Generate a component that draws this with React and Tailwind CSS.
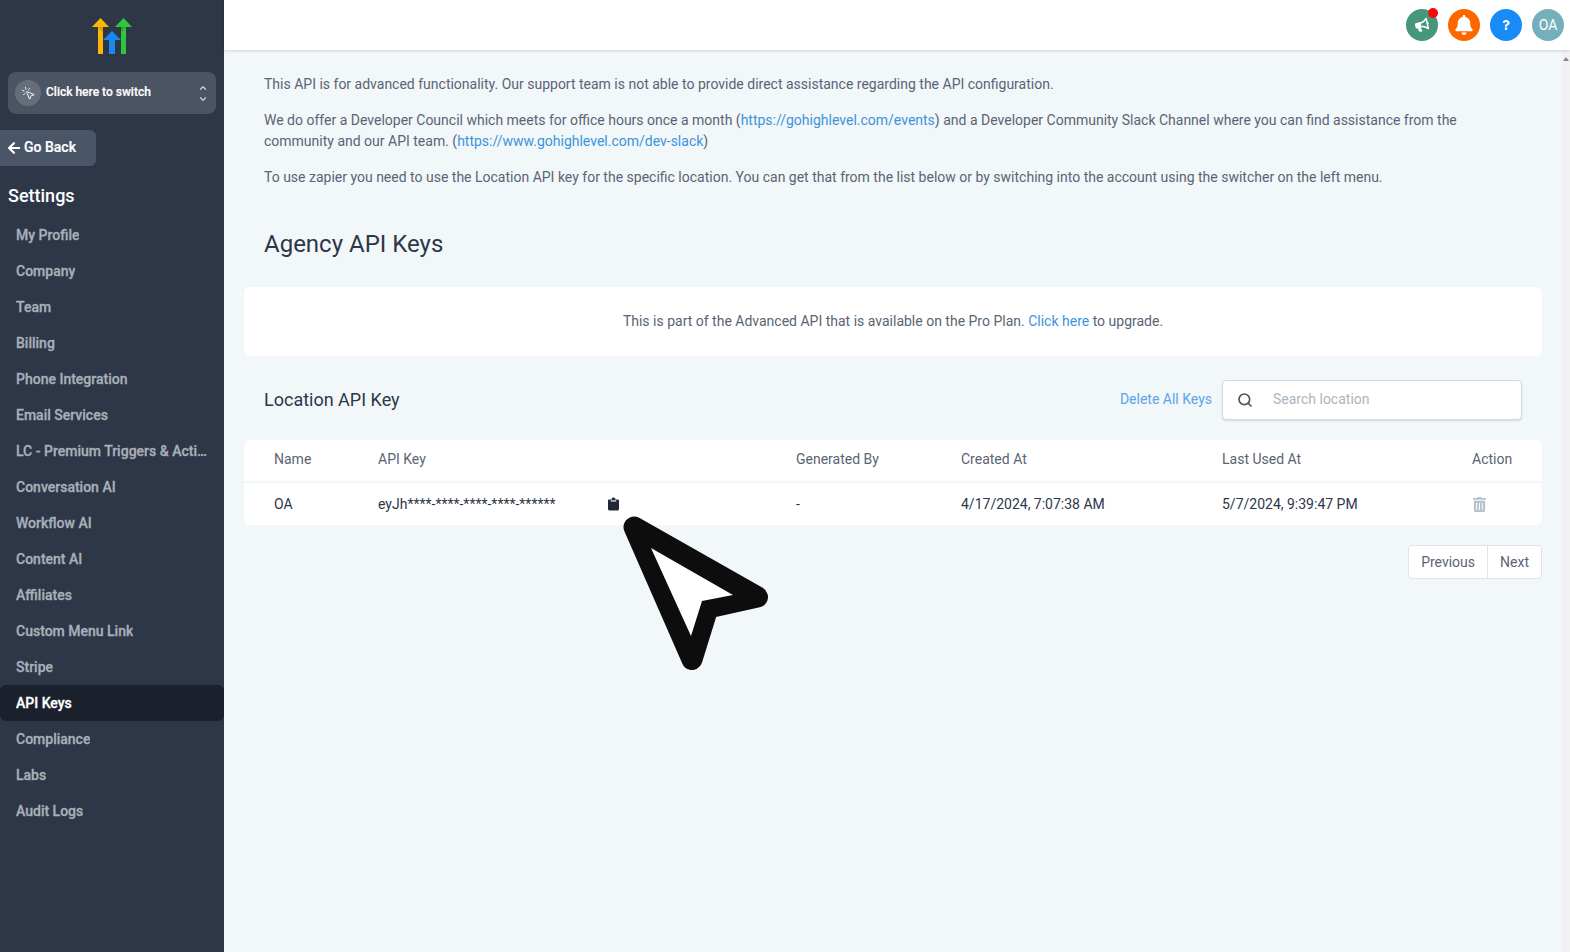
import React from "react";
import { Search, ChevronUp, ChevronDown, MousePointerClick } from "lucide-react";
import { FaBullhorn, FaBell, FaQuestion, FaTrashAlt, FaArrowLeft } from "react-icons/fa";

const items = ["My Profile","Company","Team","Billing","Phone Integration","Email Services","LC - Premium Triggers & Actions","Conversation AI","Workflow AI","Content AI","Affiliates","Custom Menu Link","Stripe","API Keys","Compliance","Labs","Audit Logs"];

function Logo() {
  return (
    <svg width="40" height="36" viewBox="0 0 40 36">
      <path d="M0 9 L8.5 0 L17 9 H11 V36 H6 V9 Z" fill="#fdb604" />
      <path d="M23 9 L31.5 0 L40 9 H34 V36 H29 V9 Z" fill="#2fc73a" />
      <path d="M11 9 L11 14 L6 9 Z" fill="#d89a10" />
      <path d="M29 9 L29 14 L34 9 Z" fill="#27a532" />
      <path d="M11 22 L20 13 L29 22 H23 V36 H17 V22 Z" fill="#1a87f2" />
    </svg>
  );
}

function Clipboard() {
  return (
    <svg width="11" height="14" viewBox="0 0 12 14" className="ml-[1px] mb-[1px]">
      <path d="M1.5 2 H4 C4 0.5 5 0 6 0 C7 0 8 0.5 8 2 H10.5 C11.3 2 12 2.6 12 3.4 V12.5 C12 13.4 11.3 14 10.5 14 H1.5 C0.7 14 0 13.4 0 12.5 V3.4 C0 2.6 0.7 2 1.5 2 Z" fill="#1f2937" />
      <rect x="3" y="3" width="6" height="1.3" fill="#ffffff" />
    </svg>
  );
}

export default function App() {
  return (
    <div className="relative flex h-[952px] w-[1570px] overflow-hidden bg-[#f2f7fa] font-['Roboto',sans-serif] text-[14px] text-[#5a6474]">
      <aside className="flex w-[224px] shrink-0 flex-col bg-[#2d3748]">
        <div className="flex h-[72px] shrink-0 justify-center pt-[18px]"><Logo /></div>
        <div className="mx-[8px] flex h-[42px] items-center rounded-[8px] bg-[#4b5463] pl-[7px] pr-[8px]">
          <span className="flex h-[26px] w-[26px] items-center justify-center rounded-full bg-[#666e7b]">
            <MousePointerClick size={15} color="#ffffff" strokeWidth={1.5} />
          </span>
          <span className="ml-[5px] mb-[2px] flex-1 text-[12px] font-medium text-white [-webkit-text-stroke:0.2px]">Click here to switch</span>
          <span className="flex flex-col items-center text-[#c9cdd3]">
            <ChevronUp size={10} strokeWidth={3} />
            <ChevronDown size={10} strokeWidth={3} className="mt-[1px]" />
          </span>
        </div>
        <div className="mt-[16px] flex h-[36px] w-[96px] items-center gap-[3px] rounded-r-[6px] bg-[#4a5568] pl-[7px] text-[14px] font-medium text-white [-webkit-text-stroke:0.2px]">
          <FaArrowLeft size={14} />
          <span className="mb-[1px]">Go Back</span>
        </div>
        <h2 className="mt-[16px] h-[27px] pl-[8px] text-[18px] leading-[27px] font-medium text-white">Settings</h2>
        <nav className="mt-[8px] flex flex-col">
          {items.map((t) => (
            <div key={t} className={`flex h-[36px] items-center truncate rounded-[6px] pl-[16px] pr-[16px] text-[14px] font-medium [-webkit-text-stroke:0.3px] ${t === "API Keys" ? "bg-[#1a202c] text-white" : "text-[#a9afb8]"}`}>
              <span className="truncate">{t}</span>
            </div>
          ))}
        </nav>
      </aside>

      <div className="flex min-w-0 flex-1 flex-col">
        <header className="relative z-10 flex h-[50px] shrink-0 items-center justify-end gap-[10px] bg-white pr-[6px] shadow-[0_1px_3px_rgba(0,0,0,0.15)]">
          <span className="relative flex h-[32px] w-[32px] items-center justify-center rounded-full bg-[#45967b]">
            <FaBullhorn size={14} color="#fff" className="-rotate-12" />
            <span className="absolute right-[0px] top-[-1px] h-[10px] w-[10px] rounded-full bg-[#f80a0a]" />
          </span>
          <span className="flex h-[32px] w-[32px] items-center justify-center rounded-full bg-[#fe6700]">
            <FaBell size={20} color="#fff" />
          </span>
          <span className="flex h-[32px] w-[32px] items-center justify-center rounded-full bg-[#188bf6]">
            <FaQuestion size={10} color="#fff" />
          </span>
          <span className="flex h-[32px] w-[32px] items-center justify-center rounded-full bg-[#74afbb] text-[14px] text-white">OA</span>
        </header>

        <div className="flex min-h-0 flex-1">
          <main className="min-w-0 flex-1 pl-[20px] pr-[20px]">
            <div className="px-[20px] pt-[24px]">
              <p className="leading-[21px]">This API is for advanced functionality. Our support team is not able to provide direct assistance regarding the API configuration.</p>
              <p className="mt-[15px] leading-[21px]">We do offer a Developer Council which meets for office hours once a month (<span className="text-[#3c94dc]">https://gohighlevel.com/events</span>) and a Developer Community Slack Channel where you can find assistance from the community and our API team. (<span className="text-[#3c94dc]">https://www.gohighlevel.com/dev-slack</span>)</p>
              <p className="mt-[15px] leading-[21px]">To use zapier you need to use the Location API key for the specific location. You can get that from the list below or by switching into the account using the switcher on the left menu.</p>
              <h1 className="mt-[38px] text-[24px] leading-[36px] text-[#2d3748]">Agency API Keys</h1>
            </div>
            <div className="mt-[25px] flex h-[69px] items-center justify-center rounded-[6px] bg-white">
              <span>This is part of the Advanced API that is available on the Pro Plan. <span className="text-[#3c94dc]">Click here</span> to upgrade.</span>
            </div>
            <div className="mt-[24px] flex h-[39px] items-center pl-[20px] pr-[20px]">
              <h3 className="mb-[1px] flex-1 text-[18px] text-[#2d3748]">Location API Key</h3>
              <span className="mr-[10px] text-[#5aa5e8]">Delete All Keys</span>
              <div className="flex h-[40px] w-[300px] items-center rounded-[4px] border border-[#d5dae1] bg-white pl-[14px] shadow-[0_1px_2px_rgba(0,0,0,0.12)]">
                <Search size={16} color="#4b5563" strokeWidth={2.5} />
                <span className="ml-[20px] text-[#adb5bd]">Search location</span>
              </div>
            </div>
            <div className="mt-[21px] overflow-hidden rounded-[6px] bg-white">
              <div className="grid h-[43px] grid-cols-[104px_418px_165px_261px_250px_1fr] items-center border-b-2 border-[#f2f7fa] pb-[3px] pl-[30px]">
                <span>Name</span><span>API Key</span><span>Generated By</span><span>Created At</span><span>Last Used At</span><span>Action</span>
              </div>
              <div className="grid h-[42px] grid-cols-[104px_418px_165px_261px_250px_1fr] items-center pl-[30px] text-[#2d3748]">
                <span>OA</span>
                <span className="flex items-center">
                  <span className="w-[229px]">eyJh****-****-****-****-******</span>
                  <Clipboard />
                </span>
                <span>-</span>
                <span>4/17/2024, 7:07:38 AM</span>
                <span>5/7/2024, 9:39:47 PM</span>
                <FaTrashAlt size={15} color="#b8c2cc" />
              </div>
            </div>
            <div className="mt-[20px] flex justify-end">
              <div className="flex h-[34px] items-center rounded-[4px] border border-[#dfe3e8] bg-white">
                <span className="flex h-full items-center border-r border-[#dfe3e8] px-[12px]">Previous</span>
                <span className="flex h-full items-center px-[12px]">Next</span>
              </div>
            </div>
          </main>
          <div className="relative w-[8px] shrink-0 bg-[#f1f1f1]">
            <span className="absolute left-[1px] top-[7px] h-0 w-0 border-x-[3px] border-b-[4px] border-x-transparent border-b-[#888]" />
          </div>
        </div>
      </div>

      <svg className="absolute left-[620px] top-[515px]" width="150" height="158" viewBox="0 0 150 158">
        <path d="M14 12 L137.5 82 L88 93 L72 144.5 Z" fill="#0d0d0d" stroke="#0d0d0d" strokeWidth="21" strokeLinejoin="round" />
        <path d="M31 33 L113 80 L82 86 L71 121 Z" fill="#ffffff" />
      </svg>
    </div>
  );
}
